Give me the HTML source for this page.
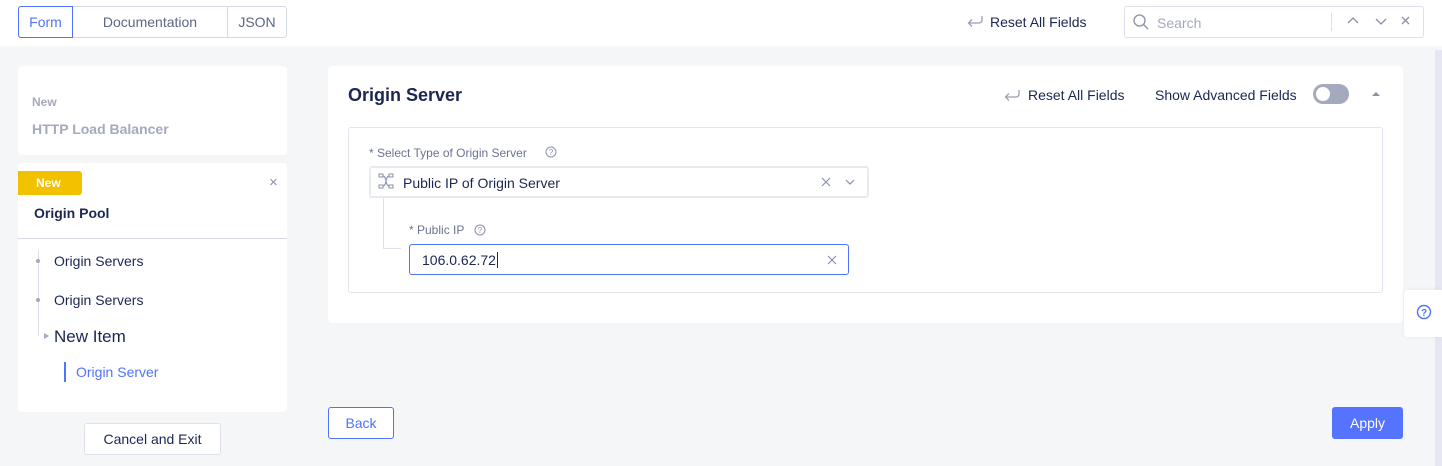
<!DOCTYPE html>
<html><head><style>
*{box-sizing:border-box;margin:0;padding:0}
body{width:1442px;height:466px;background:#f5f6f8;font-family:"Liberation Sans",sans-serif;color:#1b2653;position:relative;overflow:hidden}
.a{position:absolute}
.top{left:0;top:0;width:1442px;height:46px;background:#fff}
.tabs{left:18px;top:6px;width:269px;height:32px;display:flex;border:1px solid #d5d8e5;border-radius:3px;font-size:14px;color:#5c6687}
.tabs div{line-height:30px;text-align:center;border-right:1px solid #d5d8e5}
.card{background:#fff;border-radius:4px}
.t14{font-size:14px}
</style></head><body>
<div class="a top"></div>
<div class="a tabs"><div style="width:55px;color:#4f73ff;border:1px solid #4f73ff;margin:-1px 0 -1px -1px;border-radius:3px 0 0 3px;line-height:30px">Form</div><div style="width:155px">Documentation</div><div style="width:58px;border:none">JSON</div></div>
<svg class="a" style="left:966px;top:14px" width="18" height="14" viewBox="0 0 18 14"><path d="M16 2v4a3 3 0 0 1-3 3H3M6 5.5L2.5 9 6 12.5" fill="none" stroke="#9aa0b6" stroke-width="1.3"/></svg>
<div class="a t14" style="left:990px;top:14px">Reset All Fields</div>
<div class="a" style="left:1124px;top:6px;width:300px;height:32px;border:1px solid #dfe1ea;border-radius:3px"></div>
<svg class="a" style="left:1132px;top:13px" width="18" height="18" viewBox="0 0 18 18"><circle cx="7.5" cy="7.5" r="5.5" fill="none" stroke="#8a91ab" stroke-width="1.3"/><path d="M11.5 11.5L16 16" stroke="#8a91ab" stroke-width="1.3"/></svg>
<div class="a t14" style="left:1157px;top:15px;color:#a4a9bd">Search</div>
<div class="a" style="left:1331px;top:13px;width:1px;height:18px;background:#dfe1ea"></div>
<svg class="a" style="left:1346px;top:14px" width="70" height="14" viewBox="0 0 70 14"><path d="M2 9l5-5 5 5M30 5l5 5 5-5M56 3l7 7M63 3l-7 7" fill="none" stroke="#8a91ab" stroke-width="1.3"/></svg>
<div class="a" style="left:1435px;top:50px;width:7px;height:416px;background:#e6e7f2"></div>

<div class="a card" style="left:18px;top:66px;width:269px;height:89px"></div>
<div class="a" style="left:32px;top:95px;font-size:12px;font-weight:bold;color:#a4a9bd">New</div>
<div class="a t14" style="left:32px;top:121px;font-weight:bold;color:#a4a9bd">HTTP Load Balancer</div>
<div class="a card" style="left:18px;top:163px;width:269px;height:249px"></div>
<div class="a" style="left:18px;top:171px;width:64px;height:24px;background:#f2c100;border-radius:0 3px 3px 0;color:#fff;font-size:12px;font-weight:bold;line-height:24px;padding-left:18px">New</div>
<div class="a" style="left:269px;top:174px;color:#8a91ab;font-size:15px">×</div>
<div class="a t14" style="left:34px;top:205px;font-weight:bold">Origin Pool</div>
<div class="a" style="left:18px;top:238px;width:269px;height:1px;background:#d5d8e5"></div>
<div class="a" style="left:38px;top:250px;width:1px;height:86px;background:#dfe1ea"></div>
<div class="a" style="left:36px;top:259px;width:4px;height:4px;border-radius:2px;background:#a4a9bd"></div>
<div class="a" style="left:36px;top:298px;width:4px;height:4px;border-radius:2px;background:#a4a9bd"></div>
<div class="a" style="left:44px;top:333px;border-left:5px solid #a4a9bd;border-top:3px solid transparent;border-bottom:3px solid transparent"></div>
<div class="a t14" style="left:54px;top:253px">Origin Servers</div>
<div class="a t14" style="left:54px;top:292px">Origin Servers</div>
<div class="a" style="left:54px;top:327px;font-size:17px">New Item</div>
<div class="a" style="left:64px;top:362px;width:2px;height:20px;background:#4f73ff"></div>
<div class="a t14" style="left:76px;top:364px;color:#4f73ff">Origin Server</div>
<div class="a t14" style="left:84px;top:423px;width:137px;height:32px;background:#fff;border:1px solid #dfe1ea;border-radius:3px;text-align:center;line-height:30px">Cancel and Exit</div>

<div class="a card" style="left:328px;top:66px;width:1075px;height:257px"></div>
<div class="a" style="left:348px;top:85px;font-size:18px;font-weight:bold">Origin Server</div>
<svg class="a" style="left:1003px;top:88px" width="18" height="14" viewBox="0 0 18 14"><path d="M16 2v4a3 3 0 0 1-3 3H3M6 5.5L2.5 9 6 12.5" fill="none" stroke="#9aa0b6" stroke-width="1.3"/></svg>
<div class="a t14" style="left:1028px;top:87px">Reset All Fields</div>
<div class="a t14" style="left:1155px;top:87px">Show Advanced Fields</div>
<div class="a" style="left:1313px;top:84px;width:36px;height:20px;border-radius:10px;background:#a4a9bd"></div>
<div class="a" style="left:1316px;top:87px;width:14px;height:14px;border-radius:7px;background:#fff"></div>
<div class="a" style="left:1372px;top:92px;border-bottom:4px solid #8a91ab;border-left:4px solid transparent;border-right:4px solid transparent"></div>
<div class="a" style="left:348px;top:127px;width:1035px;height:166px;border:1px solid #e3e5ee;border-radius:3px"></div>
<div class="a" style="left:369px;top:146px;font-size:12px;color:#6b7391">* Select Type of Origin Server</div>
<svg class="a" style="left:545px;top:146px" width="12" height="12" viewBox="0 0 12 12"><circle cx="6" cy="6" r="5" fill="none" stroke="#8a91ab"/><text x="6" y="9" font-size="8" text-anchor="middle" fill="#8a91ab" font-family="Liberation Sans">?</text></svg>
<div class="a" style="left:369px;top:166px;width:500px;height:32px;border:2px solid #e8eaf2;border-radius:3px"></div>
<svg class="a" style="left:378px;top:173px" width="16" height="16" viewBox="0 0 16 16"><g fill="none" stroke="#8a91ab"><rect x="1" y="1" width="4" height="3"/><rect x="11" y="1" width="4" height="3"/><rect x="1" y="12" width="4" height="3"/><rect x="11" y="12" width="4" height="3"/><path d="M5 3c4 0 2 10 6 10M5 13c4 0 2-10 6-10"/></g></svg>
<div class="a t14" style="left:403px;top:175px">Public IP of Origin Server</div>
<svg class="a" style="left:820px;top:176px" width="40" height="12" viewBox="0 0 40 12"><path d="M2 2l8 8M10 2l-8 8M26 4l4 4 4-4" fill="none" stroke="#8a91ab" stroke-width="1.2"/></svg>
<div class="a" style="left:383px;top:198px;width:1px;height:50px;background:#dfe1ea"></div>
<div class="a" style="left:383px;top:248px;width:18px;height:1px;background:#dfe1ea"></div>
<div class="a" style="left:409px;top:223px;font-size:12px;color:#6b7391">* Public IP</div>
<svg class="a" style="left:474px;top:224px" width="12" height="12" viewBox="0 0 12 12"><circle cx="6" cy="6" r="5" fill="none" stroke="#8a91ab"/><text x="6" y="9" font-size="8" text-anchor="middle" fill="#8a91ab" font-family="Liberation Sans">?</text></svg>
<div class="a" style="left:409px;top:244px;width:440px;height:31px;border:1px solid #4f73ff;border-radius:3px"></div>
<div class="a t14" style="left:422px;top:252px">106.0.62.72<span style="border-left:1px solid #1b2653;margin-left:1px"></span></div>
<svg class="a" style="left:827px;top:255px" width="10" height="10" viewBox="0 0 10 10"><path d="M1 1l8 8M9 1l-8 8" stroke="#8a91ab" stroke-width="1.2"/></svg>

<div class="a" style="left:1404px;top:290px;width:38px;height:47px;background:#fff;border-radius:4px 0 0 4px;box-shadow:0 0 6px rgba(0,0,0,.06)"></div>
<svg class="a" style="left:1416px;top:304px" width="16" height="16" viewBox="0 0 16 16"><circle cx="8" cy="8" r="6.5" fill="none" stroke="#4f73ff" stroke-width="1.4"/><text x="8" y="12" font-size="10" font-weight="bold" text-anchor="middle" fill="#4f73ff" font-family="Liberation Sans">?</text></svg>

<div class="a t14" style="left:328px;top:407px;width:66px;height:32px;border:1px solid #4f73ff;border-radius:3px;color:#4f73ff;text-align:center;line-height:30px;background:#fff">Back</div>
<div class="a t14" style="left:1332px;top:407px;width:71px;height:32px;background:#5473ff;border-radius:3px;color:#fff;text-align:center;line-height:32px">Apply</div>
</body></html>
